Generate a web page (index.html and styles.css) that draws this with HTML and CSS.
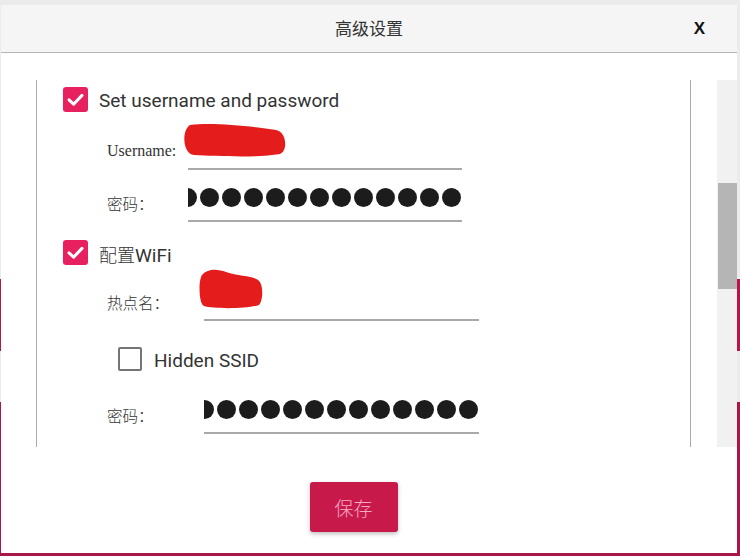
FILE: index.html
```html
<!DOCTYPE html>
<html lang="zh">
<head>
<meta charset="utf-8">
<title>高级设置</title>
<link rel="stylesheet" href="styles.css">
</head>
<body>
<div class="stage">
  <div class="backdrop">
    <div class="band band-a"></div>
    <div class="band band-b"></div>
  </div>
  <div class="dialog">
    <div class="header">
      <span></span>
      <div class="title">高级设置</div>
      <div class="close">X</div>
    </div>
    <div class="content">
      <div class="scroll">
        <div class="box">
          <div class="check-row r1">
            <span class="cb on"><svg viewBox="0 0 25 25" width="25" height="25"><path d="M6 12.8 L10.6 17.2 L19 8.4" fill="none" stroke="#fff" stroke-width="3" stroke-linecap="round" stroke-linejoin="round"/></svg></span>
            <span class="check-text">Set username and password</span>
          </div>
          <div class="field f1">
            <span class="label serif">Username:</span>
            <div class="input"></div>
            <svg class="redact redact-a" viewBox="0 0 106 36" width="106" height="36"><path d="M9 3 C30 0 70 4 95 8 C106 10 107 29 99 32 C76 36 36 34 13 33 C2 32 0 9 9 3 Z" fill="#e41c1c"/></svg>
          </div>
          <div class="field f2">
            <span class="label cjk">密码：</span>
            <div class="input dots"><span class="dot"></span><span class="dot"></span><span class="dot"></span><span class="dot"></span><span class="dot"></span><span class="dot"></span><span class="dot"></span><span class="dot"></span><span class="dot"></span><span class="dot"></span><span class="dot"></span><span class="dot"></span><span class="dot"></span><span class="dot"></span></div>
          </div>
          <div class="check-row r2">
            <span class="cb on"><svg viewBox="0 0 25 25" width="25" height="25"><path d="M6 12.8 L10.6 17.2 L19 8.4" fill="none" stroke="#fff" stroke-width="3" stroke-linecap="round" stroke-linejoin="round"/></svg></span>
            <span class="check-text"><span class="cjk-inline">配置</span>WiFi</span>
          </div>
          <div class="field f3 wide">
            <span class="label cjk">热点名：</span>
            <div class="input"></div>
            <svg class="redact redact-b" viewBox="0 0 65 41" width="65" height="41"><path d="M4 7 C10 0 20 1 28 4 C40 8 55 8 60 12 C66 16 65 33 61 37 C50 41 15 41 6 38 C1 36 0 13 4 7 Z" fill="#e41c1c"/></svg>
          </div>
          <div class="check-row r3">
            <span class="cb off"></span>
            <span class="check-text">Hidden SSID</span>
          </div>
          <div class="field f4 wide">
            <span class="label cjk">密码：</span>
            <div class="input dots"><span class="dot"></span><span class="dot"></span><span class="dot"></span><span class="dot"></span><span class="dot"></span><span class="dot"></span><span class="dot"></span><span class="dot"></span><span class="dot"></span><span class="dot"></span><span class="dot"></span><span class="dot"></span><span class="dot"></span><span class="dot"></span></div>
          </div>
        </div>
        <div class="scrollbar"><div class="thumb"></div></div>
      </div>
      <div class="footer">
        <button class="save">保存</button>
      </div>
    </div>
  </div>
</div>
</body>
</html>
```
FILE: styles.css
```css
html, body {
  margin: 0;
  padding: 0;
}
body {
  background: #ebebeb;
  font-family: Roboto, "Noto Sans CJK SC", sans-serif;
}
.stage {
  position: relative;
  width: 740px;
  height: 556px;
  overflow: hidden;
}
.backdrop {
  position: absolute;
  inset: 0;
}
.band {
  position: absolute;
  left: 0;
  right: 0;
  background: #b8154a;
}
.band-a { top: 279px; height: 72px; }
.band-b { top: 402px; bottom: 0; background: #a8164a; }

.dialog {
  position: relative;
  margin: 5px 0 0 1px;
  width: 736px;
  height: 548px;
  background: #fff;
  display: flex;
  flex-direction: column;
}
.header {
  flex: none;
  height: 47px;
  background: #f5f5f5;
  border-bottom: 1px solid #b5b5b5;
  display: grid;
  grid-template-columns: 1fr auto 1fr;
  align-items: center;
}
.title {
  font-family: "Noto Sans CJK SC", sans-serif;
  font-size: 17px;
  color: #333;
  margin-top: -3px;
}
.close {
  justify-self: end;
  padding-right: 32px;
  font-family: "Liberation Sans", Arial, sans-serif;
  font-weight: bold;
  font-size: 17px;
  color: #111;
}
.content {
  flex: 1;
  display: flex;
  flex-direction: column;
  padding-top: 27px;
}
.scroll {
  flex: none;
  height: 367px;
  margin-left: 35px;
  display: flex;
  gap: 26px;
}
.box {
  flex: none;
  width: 653px;
  border-left: 1px solid #ababab;
  border-right: 1px solid #ababab;
  overflow: hidden;
}
.scrollbar {
  flex: none;
  width: 20px;
  background: #f1f1f1;
  padding-top: 103px;
  box-sizing: border-box;
}
.thumb {
  margin-left: 1px;
  width: 19px;
  height: 106px;
  background: #b5b5b5;
}

.check-row {
  display: flex;
  align-items: center;
  gap: 11px;
  height: 25px;
  padding-left: 26px;
}
.r1 { margin-top: 7px; }
.r2 { margin-top: 18px; }
.r3 { margin-top: 26px; height: 24px; padding-left: 81px; gap: 12px; }
.cb {
  flex: none;
  width: 25px;
  height: 25px;
  border-radius: 3px;
  box-sizing: border-box;
}
.cb svg { display: block; }
.cb.on { background: #e7215f; }
.cb.off {
  width: 24px;
  height: 24px;
  border: 2px solid #757575;
  border-radius: 2px;
  background: #fff;
}
.check-text {
  font-size: 19px;
  color: #333;
  white-space: nowrap;
  padding-top: 2px;
}
.cjk-inline {
  font-family: "Noto Sans CJK SC", sans-serif;
  font-weight: 300;
  font-size: 18px;
}

.field {
  position: relative;
  display: flex;
  align-items: center;
  height: 40px;
  padding-left: 70px;
}
.f1 { margin-top: 18px; }
.f2 { margin-top: 12px; }
.f3 { margin-top: 16px; }
.f4 { margin-top: 23px; }
.label {
  flex: none;
  width: 81px;
  color: #333;
  white-space: nowrap;
}
.wide .label { width: 97px; }
.serif {
  font-family: "Liberation Serif", "Times New Roman", serif;
  font-size: 16px;
  padding-top: 1px;
}
.cjk {
  font-family: "Noto Sans CJK SC", sans-serif;
  font-weight: 300;
  font-size: 15.5px;
  padding-top: 2px;
}
.input {
  flex: none;
  width: 274px;
  height: 40px;
  box-sizing: border-box;
  border-bottom: 2px solid #a9a9a9;
}
.wide .input { width: 275px; }
.dots {
  display: flex;
  justify-content: flex-end;
  align-items: flex-start;
  gap: 3px;
  overflow: hidden;
  padding-top: 6px;
  padding-right: 1px;
}
.dot {
  flex: none;
  width: 19px;
  height: 19px;
  border-radius: 50%;
  background: #1c1c1c;
}
.redact {
  position: absolute;
  display: block;
}
.redact-a { left: 144px; top: -8px; }
.redact-b { left: 161px; top: -13px; }

.footer {
  flex: none;
  display: flex;
  justify-content: center;
  padding-right: 31px;
  margin-top: 35px;
}
.save {
  width: 88px;
  height: 50px;
  border: none;
  border-radius: 3px;
  background: #c8194b;
  color: #f7a8c4;
  font-family: "Noto Sans CJK SC", sans-serif;
  font-weight: 300;
  font-size: 19px;
  padding: 0;
  box-shadow: 0 2px 4px rgba(0, 0, 0, 0.25);
}
```
